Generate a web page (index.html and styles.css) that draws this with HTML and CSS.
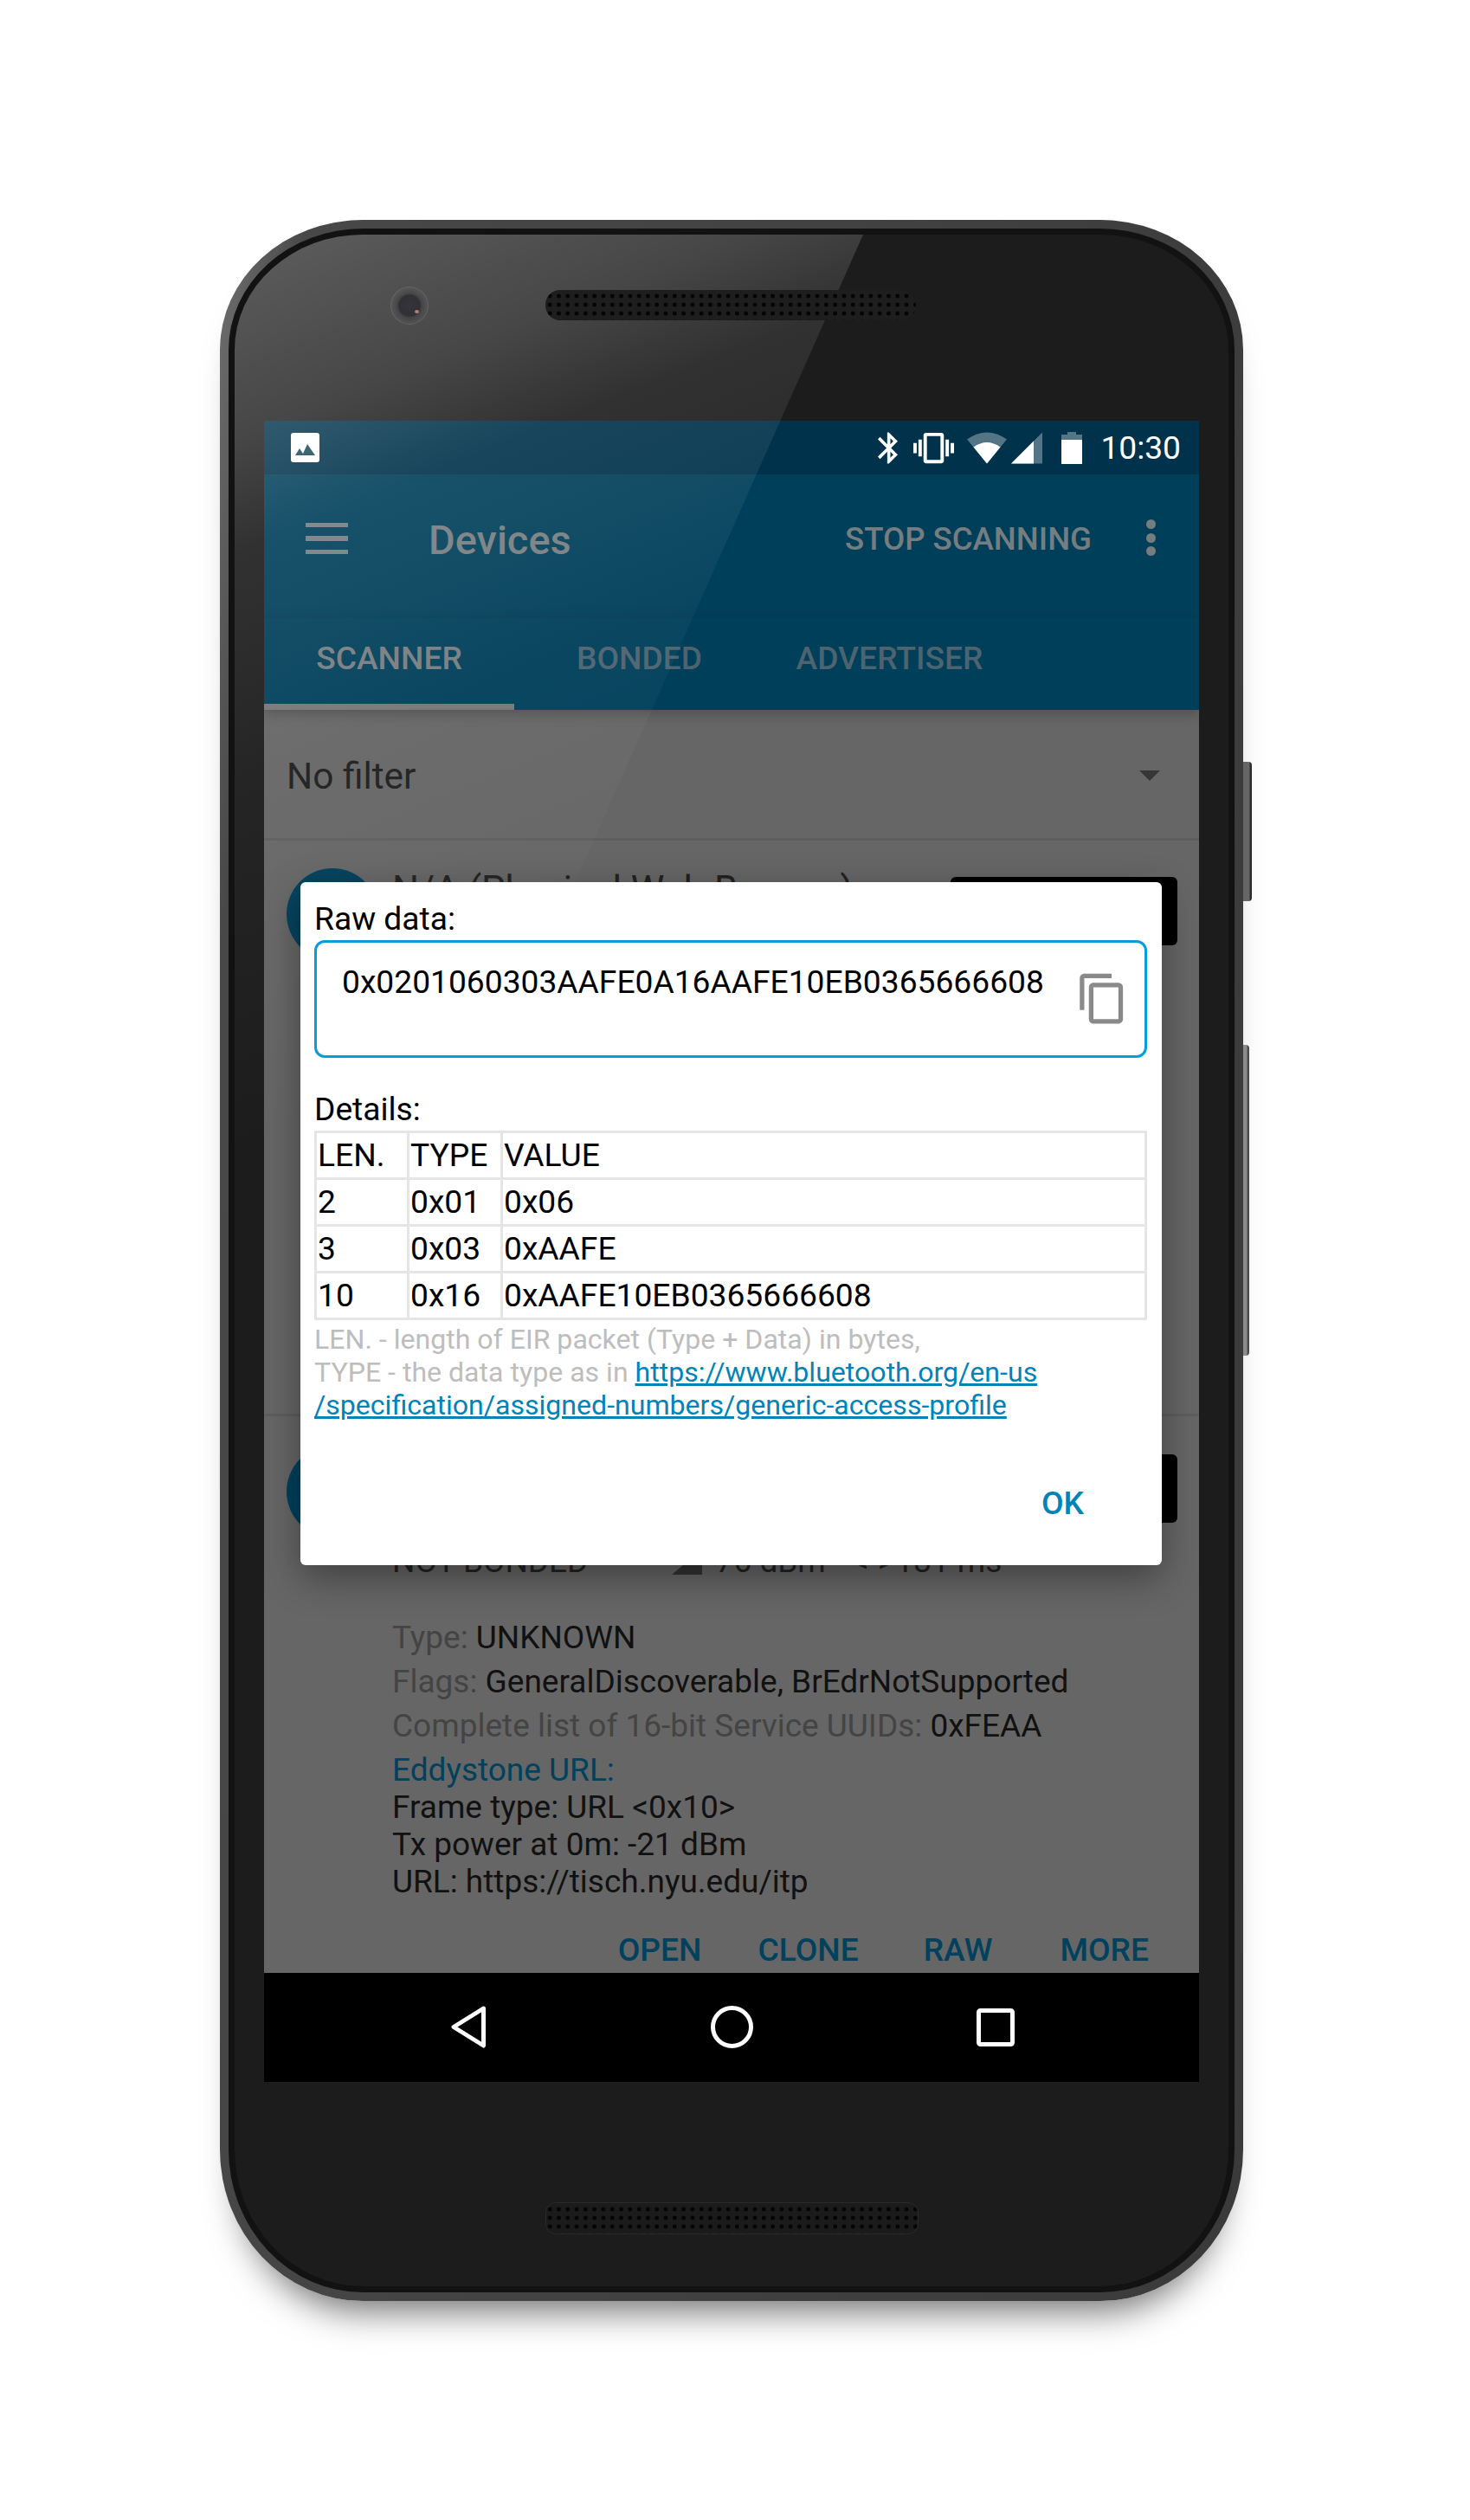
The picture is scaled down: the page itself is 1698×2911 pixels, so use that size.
FILE: index.html
```html
<!DOCTYPE html>
<html lang="en">
<head>
    <meta charset="UTF-8">
    <meta name="viewport" content="width=device-width, initial-scale=1.0">
    <title>nRF Connect - Raw data</title>
    <link rel="stylesheet" href="styles.css">
</head>
<body>
    <div class="phone">
        <div class="side-key power-key"></div>
        <div class="side-key volume-key"></div>
        <div class="bezel">
            <div class="face">
                <div class="gloss"></div>
                <div class="earpiece">
                    <div class="camera"></div>
                    <div class="speaker"></div>
                </div>

                <div class="screen">
                    <div class="status-bar">
                        <svg class="icon-image" viewBox="0 0 33 34">
                            <rect width="33" height="34" rx="3" fill="#fff"/>
                            <path d="M5 26l5-8 4 6 5-11 9 13z" fill="#1c4a5e"/>
                        </svg>
                        <div class="status-icons">
                            <svg class="icon-bluetooth" viewBox="5 2 12.7 20"><path fill="#fff" d="M17.71 7.71L12 2h-1v7.59L6.41 5 5 6.41 10.59 12 5 17.59 6.41 19 11 14.41V22h1l5.71-5.71-4.3-4.29 4.3-4.29zM13 5.83l1.88 1.88L13 9.59V5.83zm1.88 10.46L13 18.17v-3.76l1.88 1.88z"/></svg>
                            <svg class="icon-vibrate" viewBox="0 3 24 18"><path fill="#fff" d="M0 15h2V9H0v6zm3 2h2V7H3v10zm19-8v6h2V9h-2zm-3 8h2V7h-2v10zM16.5 3h-9C6.67 3 6 3.67 6 4.5v15c0 .83.67 1.5 1.5 1.5h9c.83 0 1.5-.67 1.5-1.5v-15c0-.83-.67-1.5-1.5-1.5zM16 19H8V5h8v14z"/></svg>
                            <svg class="icon-wifi" viewBox="0 0 46 36">
                                <path fill="#fff" fill-opacity=".33" d="M23 36L0 8Q23-8 46 8z"/>
                                <path fill="#fff" d="M23 36L7.500 17Q23 6 38.500 17z"/>
                            </svg>
                            <svg class="icon-signal" viewBox="0 0 36 36">
                                <path fill="#fff" fill-opacity=".33" d="M36 0v36H0z"/>
                                <path fill="#fff" d="M26 10v26H0z"/>
                            </svg>
                            <svg class="icon-battery" viewBox="0 0 24 37">
                                <path fill="#fff" fill-opacity=".33" d="M0 3h7V0h10v3h7v6H0z"/>
                                <path fill="#fff" d="M0 9h24v28H0z"/>
                            </svg>
                            <span class="clock">10:30</span>
                        </div>
                    </div>

                    <div class="toolbar">
                        <svg class="icon-menu" viewBox="0 0 49 36">
                            <path fill="#767d80" d="M0 0h49v5H0zM0 15h49v6H0zM0 31h49v5H0z"/>
                        </svg>
                        <span class="toolbar-title">Devices</span>
                        <span class="toolbar-action">STOP SCANNING</span>
                        <div class="overflow-dots"><i></i><i></i><i></i></div>
                    </div>

                    <div class="tabs">
                        <div class="tab tab-active">SCANNER</div>
                        <div class="tab">BONDED</div>
                        <div class="tab">ADVERTISER</div>
                    </div>

                    <div class="filter-row">
                        <span>No filter</span>
                        <div class="filter-arrow"></div>
                    </div>

                    <div class="device device-first">
                        <div class="device-avatar"></div>
                        <div class="device-body">
                            <div class="device-top">
                                <span class="device-name">N/A (Physical Web Beacon)</span>
                                <div class="connect-button"></div>
                            </div>
                        </div>
                    </div>

                    <div class="device">
                        <div class="device-avatar"></div>
                        <div class="device-body">
                            <div class="device-top">
                                <div class="connect-button"></div>
                            </div>
                            <div class="device-status">
                                <span class="status-bond">NOT BONDED</span>
                                <svg class="icon-rssi" viewBox="0 0 35 30"><path fill="#333" d="M35 0v30H0z"/></svg>
                                <span class="status-rssi">-76 dBm</span>
                                <span class="status-arrows">&lt;-&gt;</span>
                                <span class="status-interval">181 ms</span>
                            </div>
                            <div class="device-info">
                                <p><span class="info-label">Type:</span> UNKNOWN</p>
                                <p><span class="info-label">Flags:</span> GeneralDiscoverable, BrEdrNotSupported</p>
                                <p><span class="info-label">Complete list of 16-bit Service UUIDs:</span> 0xFEAA</p>
                                <p class="info-heading">Eddystone URL:</p>
                                <div class="info-lines">
                                    Frame type: URL &lt;0x10&gt;<br>
                                    Tx power at 0m: -21 dBm<br>
                                    URL: https://tisch.nyu.edu/itp
                                </div>
                            </div>
                            <div class="device-actions">
                                <span class="action-open">OPEN</span>
                                <span class="action-clone">CLONE</span>
                                <span class="action-raw">RAW</span>
                                <span class="action-more">MORE</span>
                            </div>
                        </div>
                    </div>

                    <div class="nav-bar">
                        <svg class="nav-icon nav-back" viewBox="0 0 40 49"><path fill="none" stroke="#fff" stroke-width="5" stroke-linejoin="round" d="M37.500 3L3 24.500 37.500 46z"/></svg>
                        <svg class="nav-icon nav-home" viewBox="0 0 49 49"><circle cx="24.500" cy="24.500" r="22" fill="none" stroke="#fff" stroke-width="5"/></svg>
                        <svg class="nav-icon nav-recent" viewBox="0 0 44 44"><rect x="2.500" y="2.500" width="39" height="39" rx="2" fill="none" stroke="#fff" stroke-width="5"/></svg>
                    </div>

                    <div class="dialog">
                        <div class="dialog-label">Raw data:</div>
                        <div class="raw-box">
                            <span>0x0201060303AAFE0A16AAFE10EB0365666608</span>
                            <svg class="icon-copy" viewBox="0 0 24 24"><path fill="#8a8a8a" d="M16 1H4c-1.100 0-2 .9-2 2v14h2V3h12V1zm3 4H8c-1.100 0-2 .9-2 2v14c0 1.100.9 2 2 2h11c1.100 0 2-.9 2-2V7c0-1.100-.9-2-2-2zm0 16H8V7h11v14z"/></svg>
                        </div>
                        <div class="dialog-label details-label">Details:</div>
                        <table class="details-table">
                            <tr><td class="col-len">LEN.</td><td class="col-type">TYPE</td><td>VALUE</td></tr>
                            <tr><td>2</td><td>0x01</td><td>0x06</td></tr>
                            <tr><td>3</td><td>0x03</td><td>0xAAFE</td></tr>
                            <tr><td>10</td><td>0x16</td><td>0xAAFE10EB0365666608</td></tr>
                        </table>
                        <div class="details-note">
                            LEN. - length of EIR packet (Type + Data) in bytes,<br>
                            TYPE - the data type as in <a href="#">https://www.bluetooth.org/en-us<br>/specification/assigned-numbers/generic-access-profile</a>
                        </div>
                        <div class="dialog-actions">OK</div>
                    </div>
                </div>

                <div class="earpiece-bottom">
                    <div class="speaker speaker-bottom"></div>
                </div>
            </div>
        </div>
    </div>
</body>
</html>
```

FILE: styles.css
```css
body {
    font-family: Roboto, "Liberation Sans", sans-serif;
    background-color: #fff;
    margin: 0;
    height: 2911px;
    overflow: hidden;
}

/* phone body */
.phone {
    position: relative;
    width: 1182px;
    height: 2404px;
    margin: 254px 0 0 254px;
    padding: 10px;
    box-sizing: border-box;
    background: linear-gradient(97deg, #707070 0, #484848 7%, #3a3a3a 100%);
    border-radius: 165px 165px 165px 165px / 150px 150px 175px 175px;
    box-shadow: 0 36px 40px -24px rgba(0, 0, 0, 0.55);
}

.side-key {
    position: absolute;
    left: 100%;
    border-radius: 0 4px 4px 0;
}

.power-key {
    top: 626px;
    width: 10px;
    height: 161px;
    background: linear-gradient(90deg, #666 0, #666 70%, #2c2c2c 80%);
}

.volume-key {
    top: 953px;
    width: 7px;
    height: 359px;
    background: linear-gradient(90deg, #8c8c8c 0, #8c8c8c 60%, #4a4a4a 70%);
}

.bezel {
    height: 100%;
    padding: 7px;
    box-sizing: border-box;
    background-color: #121212;
    border-radius: 155px 155px 155px 155px / 140px 140px 165px 165px;
}

.face {
    position: relative;
    height: 100%;
    padding: 215px 0 0 34px;
    box-sizing: border-box;
    background-color: #1c1c1c;
    border-radius: 148px 148px 148px 148px / 133px 133px 158px 158px;
    overflow: hidden;
}

.gloss {
    position: absolute;
    top: 0;
    left: 0;
    width: 900px;
    height: 1632px;
    background: linear-gradient(158deg, rgba(255, 255, 255, 0.29) 0, rgba(255, 255, 255, 0.19) 220px, rgba(255, 255, 255, 0.095) 340px, rgba(255, 255, 255, 0.065) 480px, rgba(255, 255, 255, 0.04) 590px, rgba(255, 255, 255, 0.022) 760px, rgba(255, 255, 255, 0) 1000px);
    clip-path: polygon(0 0, 726px 0, 0 1632px);
    z-index: 2;
    pointer-events: none;
}

.earpiece {
    position: absolute;
    top: 64px;
    left: 0;
    width: 100%;
    height: 35px;
    z-index: 3;
}

.camera {
    position: absolute;
    top: -4px;
    left: 180px;
    width: 44px;
    height: 44px;
    box-sizing: border-box;
    background: radial-gradient(circle, #34343a 0, #303036 12px, rgba(0, 0, 0, 0.1) 14px, rgba(255, 255, 255, 0.03) 20px);
    border: 1px solid rgba(255, 255, 255, 0.09);
    border-radius: 50%;
}

.camera::after {
    content: "";
    position: absolute;
    top: 26px;
    left: 27px;
    width: 5px;
    height: 4px;
    background-color: #b08078;
    border-radius: 50%;
}

.speaker {
    position: absolute;
    left: 359px;
    width: 428px;
    height: 35px;
    background-color: #1e1e1e;
    background-image: radial-gradient(circle, #050505 2.2px, transparent 2.8px);
    background-size: 10.3px 10px;
    background-position: 0 2px;
    border-radius: 17px;
}

.earpiece-bottom {
    position: absolute;
    top: 2273px;
    left: 0;
    width: 100%;
}

.speaker-bottom {
    height: 37px;
    width: 431px;
    background-color: #1b1b1b;
    background-position: 0 3px;
    border-radius: 12px;
    box-shadow: inset 0 0 0 1px #2a2a2a;
}

/* screen content */
.screen {
    position: relative;
    width: 1080px;
    height: 1919px;
    display: flex;
    flex-direction: column;
    background-color: #666;
    overflow: hidden;
    font-size: 37.2px;
}

.status-bar {
    height: 62px;
    padding: 0 21px 0 31px;
    display: flex;
    align-items: center;
    justify-content: space-between;
    background-color: #00324b;
}

.icon-image {
    width: 33px;
    height: 34px;
}

.status-icons {
    display: flex;
    align-items: center;
}

.status-icons svg {
    height: 37px;
}

.icon-bluetooth {
    width: 23px;
}

.icon-vibrate {
    width: 47px;
    margin-left: 18px;
}

.icon-wifi {
    width: 46px;
    margin-left: 15px;
}

.icon-signal {
    width: 36px;
    margin-left: 5px;
}

.icon-battery {
    width: 24px;
    margin-left: 22px;
}

.clock {
    margin-left: 21px;
    color: #fff;
}

.toolbar {
    height: 166px;
    display: flex;
    align-items: flex-start;
    background-color: #003f5a;
    color: #767d80;
    font-weight: 500;
}

.icon-menu {
    width: 49px;
    height: 36px;
    margin: 56px 0 0 48px;
}

.toolbar-title {
    margin: 48px 0 0 93px;
    font-size: 47px;
}

.toolbar-action {
    margin: 53px 0 0 auto;
    font-size: 36.6px;
}

.overflow-dots {
    width: 11px;
    margin: 52px 50px 0 63px;
}

.overflow-dots i {
    display: block;
    height: 11px;
    margin-bottom: 4.5px;
    background-color: #767d80;
    border-radius: 50%;
}

.tabs {
    position: relative;
    display: flex;
    height: 106px;
    flex-shrink: 0;
    background-color: #003f5a;
    box-shadow: 0 4px 14px rgba(0, 0, 0, 0.25);
    font-weight: 500;
    color: #4d6370;
}

.tab {
    width: 289px;
    padding-top: 24px;
    box-sizing: border-box;
    text-align: center;
}

.tab-active {
    color: #767d80;
    border-bottom: 7px solid #767676;
}

.filter-row {
    height: 151px;
    flex-shrink: 0;
    padding: 4px 45px 0 26px;
    display: flex;
    align-items: center;
    justify-content: space-between;
    color: #1e1e1e;
    font-size: 42.4px;
    border-bottom: 3px solid #5e5e5e;
    box-sizing: border-box;
}

.filter-arrow {
    border-left: 12px solid transparent;
    border-right: 12px solid transparent;
    border-top: 12px solid #363636;
}

.device {
    display: flex;
    padding-top: 34px;
    color: #111;
}

.device-first {
    height: 665px;
    flex-shrink: 0;
    padding-top: 32px;
    box-sizing: border-box;
    border-bottom: 3px solid #5e5e5e;
}

.device-avatar {
    width: 106px;
    height: 106px;
    flex-shrink: 0;
    margin-left: 26px;
    background-color: #00405c;
    border-radius: 50%;
}

.device-body {
    flex: 1;
    margin-left: 16px;
    font-size: 37px;
    line-height: 43px;
}

.device-top {
    height: 112px;
    display: flex;
    justify-content: space-between;
}

.device-name {
    font-size: 43.5px;
    line-height: 51px;
    color: #222;
}

.connect-button {
    width: 262px;
    height: 79px;
    margin: 10px 25px 0 auto;
    background-color: #000;
    border-radius: 6px;
}

.device-status {
    display: flex;
    align-items: center;
    height: 43px;
    color: #222;
}

.icon-rssi {
    width: 35px;
    height: 30px;
    margin-left: 97px;
}

.status-rssi {
    margin-left: 5px;
}

.status-arrows {
    margin-left: 31px;
}

.status-interval {
    margin-left: 1px;
}

.device-info {
    margin-top: 45px;
}

.device-info p {
    margin: 0 0 8px;
}

.info-label {
    color: #444;
}

.device-info .info-heading {
    margin: 0;
    color: #00415e;
}

.device-actions {
    display: flex;
    justify-content: flex-end;
    margin: 36px 58px 0 0;
    color: #00415e;
    font-size: 37.2px;
    font-weight: 500;
}

.action-clone {
    margin-left: 65px;
}

.action-raw {
    margin-left: 75px;
}

.action-more {
    margin-left: 78px;
}

.nav-bar {
    position: absolute;
    left: 0;
    bottom: 0;
    width: 100%;
    height: 126px;
    background-color: #000;
}

.nav-icon {
    position: absolute;
    top: 38px;
}

.nav-back {
    left: 216px;
    width: 40px;
    height: 49px;
}

.nav-home {
    left: 516px;
    width: 49px;
    height: 49px;
}

.nav-recent {
    top: 41px;
    left: 823px;
    width: 44px;
    height: 44px;
}

/* raw data dialog */
.dialog {
    position: absolute;
    top: 533px;
    left: 42px;
    width: 995px;
    height: 789px;
    padding: 21px 17px 0 16px;
    box-sizing: border-box;
    background-color: #fff;
    color: #000;
    line-height: 43px;
    border-radius: 6px;
    box-shadow: 0 14px 44px rgba(0, 0, 0, 0.38);
    z-index: 3;
}

.raw-box {
    position: relative;
    height: 136px;
    margin-top: 3px;
    padding: 24px 0 0 29px;
    box-sizing: border-box;
    border: 3px solid #0a9bdb;
    border-radius: 12px;
}

.icon-copy {
    position: absolute;
    top: 33px;
    left: 876px;
    width: 63px;
    height: 63px;
}

.details-label {
    margin-top: 38px;
}

.details-table {
    width: 962px;
    margin-top: 3px;
    border-collapse: collapse;
    border: 3px solid #e5e5e5;
}

.details-table td {
    height: 51px;
    padding: 0 0 0 1px;
    border: 3px solid #e5e5e5;
}

.col-len {
    width: 103px;
}

.col-type {
    width: 104px;
}

.details-note {
    margin-top: 3px;
    font-size: 32.1px;
    line-height: 38px;
    color: #bdbdbd;
}

.details-note a {
    color: #0083b9;
}

.dialog-actions {
    margin: 73px 73px 0 0;
    text-align: right;
    font-weight: 500;
    color: #0083b9;
}
```
